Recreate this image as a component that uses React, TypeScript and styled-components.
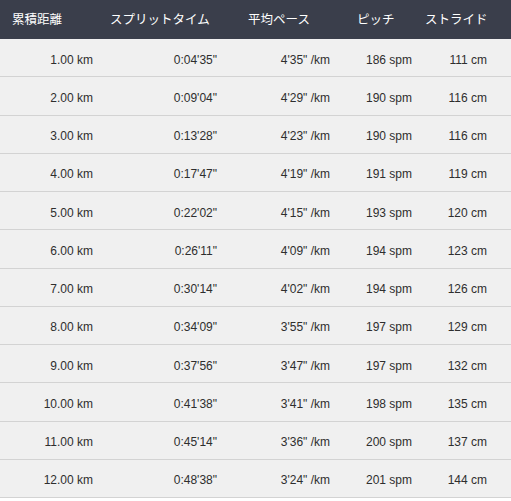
import React from 'react';
import styled, { createGlobalStyle } from 'styled-components';

const GlobalStyle = createGlobalStyle`
  html, body {
    margin: 0;
    padding: 0;
    background: #ffffff;
  }
`;

type Column = {
  key: string;
  label: string;
  width: number;
  headPad: number;
  dataPad: number;
};

const columns: Array<Column> = [
  { key: 'dist', label: '累積距離', width: 104, headPad: 12, dataPad: 11 },
  { key: 'split', label: 'スプリットタイム', width: 132, headPad: 6, dataPad: 19 },
  { key: 'pace', label: '平均ペース', width: 109, headPad: 12, dataPad: 15 },
  { key: 'pitch', label: 'ピッチ', width: 75, headPad: 12, dataPad: 8 },
  { key: 'stride', label: 'ストライド', width: 91, headPad: 5, dataPad: 24 },
];

type Lap = { dist: string; split: string; pace: string; pitch: number; stride: number };

const laps: Array<Lap> = [
  { dist: '1.00', split: `0:04'35"`, pace: `4'35"`, pitch: 186, stride: 111 },
  { dist: '2.00', split: `0:09'04"`, pace: `4'29"`, pitch: 190, stride: 116 },
  { dist: '3.00', split: `0:13'28"`, pace: `4'23"`, pitch: 190, stride: 116 },
  { dist: '4.00', split: `0:17'47"`, pace: `4'19"`, pitch: 191, stride: 119 },
  { dist: '5.00', split: `0:22'02"`, pace: `4'15"`, pitch: 193, stride: 120 },
  { dist: '6.00', split: `0:26'11"`, pace: `4'09"`, pitch: 194, stride: 123 },
  { dist: '7.00', split: `0:30'14"`, pace: `4'02"`, pitch: 194, stride: 126 },
  { dist: '8.00', split: `0:34'09"`, pace: `3'55"`, pitch: 197, stride: 129 },
  { dist: '9.00', split: `0:37'56"`, pace: `3'47"`, pitch: 197, stride: 132 },
  { dist: '10.00', split: `0:41'38"`, pace: `3'41"`, pitch: 198, stride: 135 },
  { dist: '11.00', split: `0:45'14"`, pace: `3'36"`, pitch: 200, stride: 137 },
  { dist: '12.00', split: `0:48'38"`, pace: `3'24"`, pitch: 201, stride: 144 },
];

const gridTemplate = columns.map((c) => `${c.width}px`).join(' ');

const Table = styled.div`
  width: 511px;
  display: flex;
  flex-direction: column;
  background-color: #f0f0f0;
`;

const HeaderRow = styled.div`
  display: grid;
  grid-template-columns: ${gridTemplate};
  height: 39px;
  align-items: center;
  background-color: #3a3e4b;
`;

const HeaderCell = styled.div<{ $pad: number }>`
  padding-left: ${({ $pad }) => $pad}px;
  padding-bottom: 2px;
  font-family: 'Noto Sans CJK JP', 'Noto Sans', sans-serif;
  font-size: 12.5px;
  color: #ffffff;
  white-space: nowrap;
`;

const Row = styled.div`
  display: grid;
  grid-template-columns: ${gridTemplate};
  height: 37.25px;
  align-items: center;
  border-bottom: 1px solid #d3d3d3;
  background-color: #f0f0f0;
`;

const Cell = styled.div<{ $pad: number }>`
  padding-right: ${({ $pad }) => $pad}px;
  padding-top: 4px;
  text-align: right;
  font-family: 'Liberation Sans', Arial, sans-serif;
  font-size: 12px;
  color: #2e2e2e;
  white-space: nowrap;
`;

const formatCell = (lap: Lap, key: string) => {
  switch (key) {
    case 'dist':
      return `${lap.dist} km`;
    case 'split':
      return lap.split;
    case 'pace':
      return `${lap.pace} /km`;
    case 'pitch':
      return `${lap.pitch} spm`;
    default:
      return `${lap.stride} cm`;
  }
};

const App = () => (
  <>
    <GlobalStyle />
    <Table>
      <HeaderRow>
        {columns.map((c) => (
          <HeaderCell key={c.key} $pad={c.headPad}>
            {c.label}
          </HeaderCell>
        ))}
      </HeaderRow>
      {laps.map((lap) => (
        <Row key={lap.dist}>
          {columns.map((c) => (
            <Cell key={c.key} $pad={c.dataPad}>
              {formatCell(lap, c.key)}
            </Cell>
          ))}
        </Row>
      ))}
    </Table>
  </>
);

export default App;
